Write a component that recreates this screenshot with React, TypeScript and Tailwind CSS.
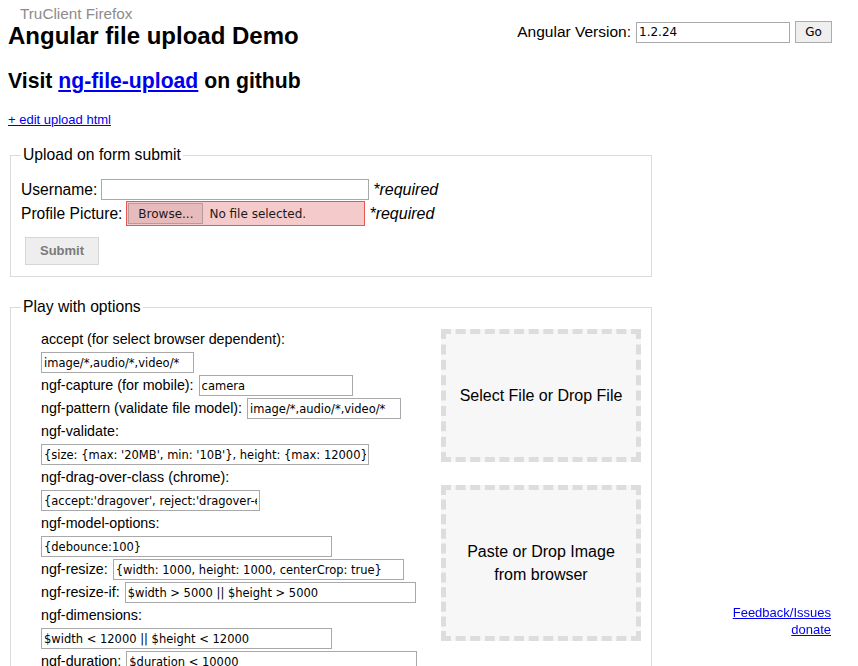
import React from "react";

const inputFont = "font-['DejaVu_Sans',Verdana,sans-serif] text-[12px]";

function TextBox({ value, w }: { value: string; w: string }) {
  return (
    <input
      readOnly
      value={value}
      className={`${w} h-[21px] shrink-0 border border-[#a9a9a9] bg-white px-[2px] text-black outline-none font-['DejaVu_Sans',Verdana,sans-serif] text-[11.5px]`}
    />
  );
}

function LabelRow({ children }: { children: React.ReactNode }) {
  return <div className="h-[23px] whitespace-nowrap leading-[23px]">{children}</div>;
}

function InputRow({ label, value, w }: { label?: string; value: string; w: string }) {
  return (
    <div className="flex h-[23px] items-center whitespace-nowrap">
      {label && <span className="mr-[5px] leading-[23px]">{label}</span>}
      <TextBox value={value} w={w} />
    </div>
  );
}

export default function App() {
  return (
    <div className="relative min-h-[666px] bg-white pl-[8px] pr-[26px] font-['Liberation_Sans',Arial,sans-serif] text-black">
      {/* Header */}
      <div className="flex items-start justify-between">
        <div>
          <div className="pl-[12px] pt-[5px] text-[15.3px] leading-[17px] text-[#8c8c8c]">TruClient Firefox</div>
          <h1 className="text-[24px] font-bold leading-[28px]">Angular file upload Demo</h1>
        </div>
        <div className="mt-[21px] flex items-center text-[15.5px] leading-[18px]">
          <span>Angular Version:</span>
          <input
            readOnly
            value="1.2.24"
            className={`ml-[5px] h-[21px] w-[154px] border border-[#a9a9a9] bg-white px-[2px] outline-none ${inputFont}`}
          />
          <button
            className={`ml-[5px] h-[22px] w-[37px] border border-[#acacac] bg-[#efefef] text-black ${inputFont}`}
          >
            Go
          </button>
        </div>
      </div>

      <h2 className="mt-[19px] text-[21.2px] font-bold leading-[24px]">
        Visit{" "}
        <a href="#" className="text-[#0000ee] underline">
          ng-file-upload
        </a>{" "}
        on github
      </h2>

      <div className="mt-[19px] text-[13px] leading-[15px]">
        <a href="#" className="text-[#0000ee] underline">
          + edit upload html
        </a>
      </div>

      {/* Fieldset 1 */}
      <fieldset className="ml-[2px] mt-[19px] w-[642px] min-w-0 border border-[#dcdcdc] px-[10px] pb-[11px] pt-[14px]">
        <legend className="px-[2px] text-[15.7px] leading-[18px]">Upload on form submit</legend>
        <div className="flex h-[23px] items-center text-[15.6px] whitespace-nowrap">
          <span>Username:</span>
          <input
            readOnly
            className={`ml-[4px] h-[21px] w-[268px] border border-[#a9a9a9] bg-white outline-none ${inputFont}`}
          />
          <i className="ml-[4px] text-[16px]">*required</i>
        </div>
        <div className="flex h-[25px] items-center text-[15.6px] whitespace-nowrap">
          <span>Profile Picture:</span>
          <div className="ml-[4px] flex h-[25px] w-[239px] items-center border border-[#e85555] bg-[#f5caca] pl-[1px]">
            <span
              className={`flex h-[21px] w-[75px] items-center justify-center border border-[#b79b9c] bg-[#e7bbbc] text-[#1a1a1a] ${inputFont}`}
            >
              Browse...
            </span>
            <span className={`ml-[6px] text-[#1a1a1a] ${inputFont}`}>No file selected.</span>
          </div>
          <i className="ml-[4px] text-[16px]">*required</i>
        </div>
        <button className="ml-[4px] mt-[11px] h-[28px] w-[74px] border border-[#d6d6d6] bg-[#eeeeee] text-[13px] font-bold text-[#7a7a7a]">
          Submit
        </button>
      </fieldset>

      {/* Fieldset 2 */}
      <fieldset className="ml-[2px] mt-[21px] w-[642px] min-w-0 border border-[#dcdcdc] px-[10px] pb-[11px] pt-[12px]">
        <legend className="px-[2px] text-[15.7px] leading-[18px]">Play with options</legend>
        <div className="flex">
          <div className="min-w-0 flex-1 pl-[20px] text-[14.3px]">
            <LabelRow>accept (for select browser dependent):</LabelRow>
            <InputRow value="image/*,audio/*,video/*" w="w-[153px]" />
            <InputRow label="ngf-capture (for mobile):" value="camera" w="w-[154px]" />
            <InputRow label="ngf-pattern (validate file model):" value="image/*,audio/*,video/*" w="w-[154px]" />
            <LabelRow>ngf-validate:</LabelRow>
            <InputRow
              value="{size: {max: '20MB', min: '10B'}, height: {max: 12000}, width: {max: 12000}}"
              w="w-[328px]"
            />
            <LabelRow>ngf-drag-over-class (chrome):</LabelRow>
            <InputRow value="{accept:'dragover', reject:'dragover-err', pattern:'image/*,audio/*,video/*'}" w="w-[219px]" />
            <LabelRow>ngf-model-options:</LabelRow>
            <InputRow value="{debounce:100}" w="w-[291px]" />
            <InputRow label="ngf-resize:" value="{width: 1000, height: 1000, centerCrop: true}" w="w-[291px]" />
            <InputRow label="ngf-resize-if:" value="$width > 5000 || $height > 5000" w="w-[291px]" />
            <LabelRow>ngf-dimensions:</LabelRow>
            <InputRow value="$width < 12000 || $height < 12000" w="w-[291px]" />
            <InputRow label="ngf-duration:" value="$duration < 10000" w="w-[291px]" />
            <InputRow label="ngf-max-total-size:" value="500MB" w="w-[291px]" />
            <InputRow label="ngf-keep:" value="false" w="w-[154px]" />
          </div>
          <div className="w-[200px] shrink-0 text-[16px]">
            <div className="mt-[1px] flex h-[133px] items-center justify-center border-[5px] border-dashed border-[#dddddd] bg-[#f7f7f7] text-center">
              Select File or Drop File
            </div>
            <div className="mt-[23px] flex h-[156px] items-center justify-center border-[5px] border-dashed border-[#dddddd] bg-[#f7f7f7] text-center leading-[23px]">
              <span>
                Paste or Drop Image
                <br />
                from browser
              </span>
            </div>
          </div>
        </div>
      </fieldset>

      {/* Footer links */}
      <div className="fixed bottom-[28px] right-[27px] text-right text-[13px] leading-[17px]">
        <div>
          <a href="#" className="text-[#0000ee] underline">
            Feedback/Issues
          </a>
        </div>
        <div>
          <a href="#" className="text-[#0000ee] underline">
            donate
          </a>
        </div>
      </div>
    </div>
  );
}
